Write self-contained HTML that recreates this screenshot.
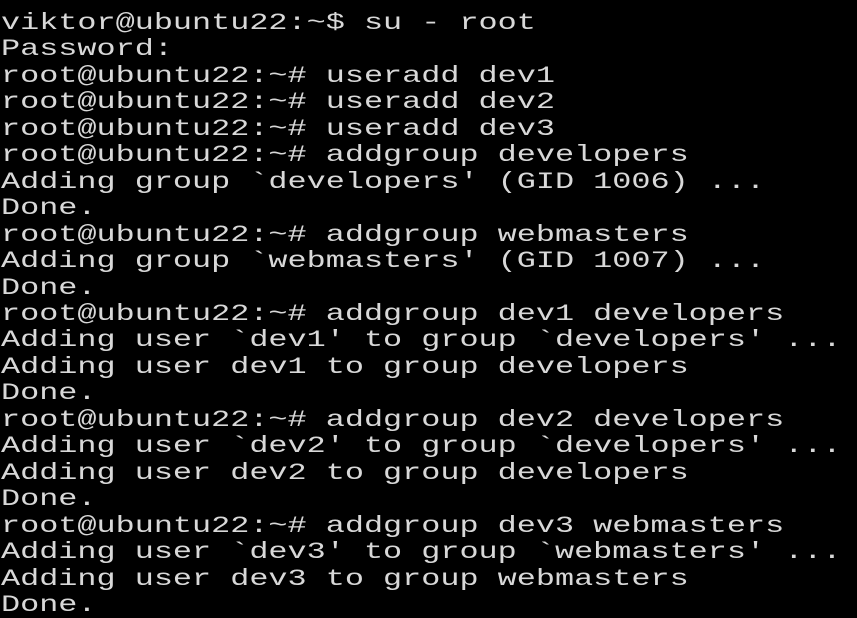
<!DOCTYPE html>
<html><head><meta charset="utf-8"><style>
html,body{margin:0;padding:0;background:#000;width:857px;height:617px;overflow:hidden}
pre{margin:0;position:absolute;left:1px;top:10px;font-family:"Liberation Mono",monospace;font-size:23px;line-height:26.45px;color:#d8d8d8;transform:scaleX(1.384);transform-origin:0 0;white-space:pre}
</style></head><body><pre>viktor@ubuntu22:~$ su - root
Password:
root@ubuntu22:~# useradd dev1
root@ubuntu22:~# useradd dev2
root@ubuntu22:~# useradd dev3
root@ubuntu22:~# addgroup developers
Adding group `developers' (GID 1006) ...
Done.
root@ubuntu22:~# addgroup webmasters
Adding group `webmasters' (GID 1007) ...
Done.
root@ubuntu22:~# addgroup dev1 developers
Adding user `dev1' to group `developers' ...
Adding user dev1 to group developers
Done.
root@ubuntu22:~# addgroup dev2 developers
Adding user `dev2' to group `developers' ...
Adding user dev2 to group developers
Done.
root@ubuntu22:~# addgroup dev3 webmasters
Adding user `dev3' to group `webmasters' ...
Adding user dev3 to group webmasters
Done.</pre></body></html>
